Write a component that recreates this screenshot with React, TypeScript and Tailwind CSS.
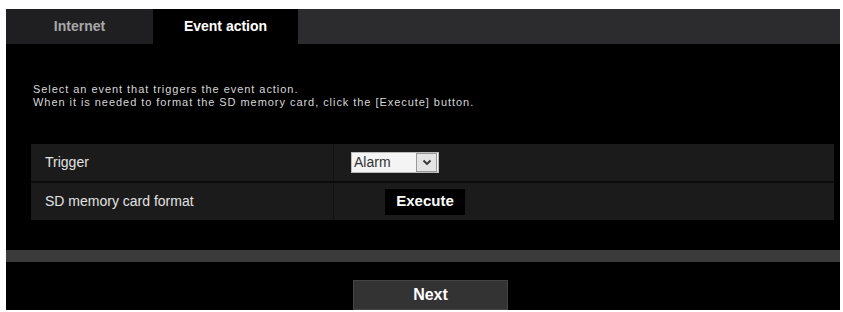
import React from 'react';

function Tab({ label, active }: { label: string; active?: boolean }) {
  return (
    <div
      className={
        active
          ? 'flex items-center justify-center w-[145px] h-full bg-black text-white text-[14px] font-bold'
          : 'flex items-center justify-center w-[147px] h-full bg-[#1f1f21] text-[#a8a8a8] text-[14px] font-bold'
      }
    >
      {label}
    </div>
  );
}

function Row({ label, children }: { label: string; children: React.ReactNode }) {
  return (
    <div className="flex h-[37px] bg-[#1b1b1b]">
      <div className="flex items-center w-[303px] pl-[14px] border-r border-[#111] text-[14px] text-[#e2e2e2]">
        {label}
      </div>
      <div className="flex items-center flex-1">{children}</div>
    </div>
  );
}

export default function App() {
  return (
    <div
      className="w-[843px] h-[312px] bg-white pt-[9px] pl-[6px]"
      style={{ fontFamily: '"Liberation Sans", Arial, sans-serif' }}
    >
      <div className="flex flex-col w-[834px] h-[301px] bg-black">
        <div className="flex h-[35px] bg-[#2c2c2f]">
          <Tab label="Internet" />
          <Tab label="Event action" active />
        </div>

        <div className="pl-[27px] pt-[39px] text-[11px] leading-[13px] tracking-[0.95px] text-[#d6d6d6]">
          <p>Select an event that triggers the event action.</p>
          <p>When it is needed to format the SD memory card, click the [Execute] button.</p>
        </div>

        <div className="flex flex-col gap-[2px] ml-[25px] mt-[35px] w-[803px] bg-[#0c0c0c]">
          <Row label="Trigger">
            <div className="flex items-center ml-[17px] h-[21px] w-[88px] bg-[#f4f4f4] border border-[#bbb]">
              <span className="flex-1 pl-[2px] text-[14px] text-[#333]">Alarm</span>
              <span className="flex items-center justify-center w-[21px] h-[19px] mr-px bg-[#e4e4e4] border border-[#999]">
                <svg width="10" height="7" viewBox="0 0 10 7">
                  <path d="M1.5 1.5 L5 5 L8.5 1.5" fill="none" stroke="#333" strokeWidth="1.8" />
                </svg>
              </span>
            </div>
          </Row>
          <Row label="SD memory card format">
            <button className="ml-[51px] h-[26px] w-[80px] bg-black text-white text-[15px] font-bold">
              Execute
            </button>
          </Row>
        </div>

        <div className="mt-[30px] h-[12px] bg-[#3a3a3a]" />

        <button className="ml-[347px] mt-[18px] h-[30px] w-[155px] bg-[#333] border border-[#444] text-white text-[16px] font-bold">
          Next
        </button>
      </div>
    </div>
  );
}
